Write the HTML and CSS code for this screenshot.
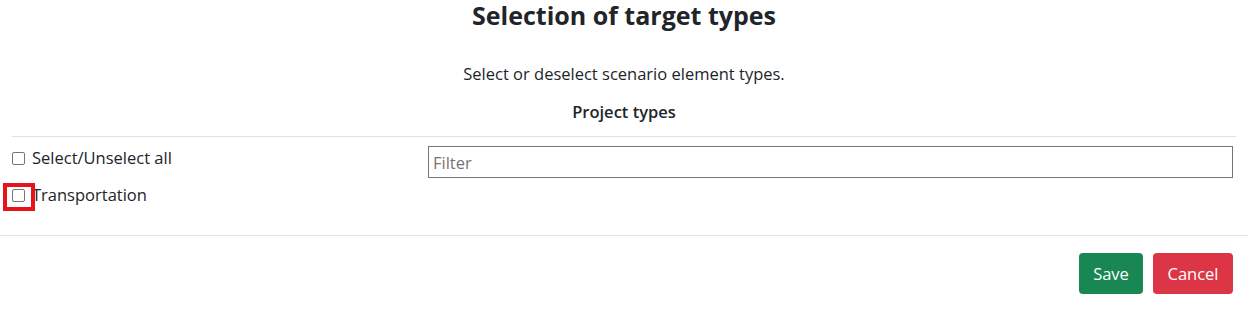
FILE: index.html
```html
<!DOCTYPE html>
<html lang="en">
<head>
<meta charset="utf-8">
<title>Selection of target types</title>
<link rel="stylesheet" href="styles.css">
</head>
<body>
<div class="dialog">
  <h1 class="title">Selection of target types</h1>
  <p class="subtitle">Select or deselect scenario element types.</p>
  <h2 class="section">Project types</h2>
  <hr class="divider">
  <div class="types">
    <div class="checks">
      <label class="check"><input type="checkbox" class="box"><span>Select/Unselect all</span></label>
      <label class="check"><span class="box-wrap"><input type="checkbox" class="box"><span class="highlight"></span></span><span>Transportation</span></label>
    </div>
    <input type="text" class="filter" placeholder="Filter">
  </div>
  <div class="footer">
    <button class="btn btn-save">Save</button>
    <button class="btn btn-cancel">Cancel</button>
  </div>
</div>
</body>
</html>
```
FILE: styles.css
```css
* { box-sizing: border-box; }
html, body { margin: 0; padding: 0; background: #fff; }
body {
  font-family: "Open Sans", "Noto Sans", sans-serif;
  color: #212529;
  font-size: 16px;
}
.dialog { width: 1248px; }
.title {
  margin: 0;
  text-align: center;
  font-size: 25px;
  line-height: 30px;
  font-weight: 700;
}
.subtitle {
  margin: 32px 0 0;
  text-align: center;
  font-size: 16.5px;
  line-height: 24px;
}
.section {
  margin: 14px 0 0;
  text-align: center;
  font-size: 16.5px;
  line-height: 24px;
  font-weight: 600;
}
.divider {
  margin: 12px 12px 0;
  border: 0;
  border-top: 1px solid #dee2e6;
  height: 0;
}
.types {
  display: grid;
  grid-template-columns: 416px 805px;
  padding: 0 12px;
  margin-top: 9px;
  align-items: start;
}
.checks { display: flex; flex-direction: column; gap: 13px; }
.check {
  display: flex;
  align-items: center;
  gap: 7px;
  font-size: 16.5px;
  line-height: 24px;
}
.box-wrap { position: relative; display: flex; }
.box {
  appearance: none;
  -webkit-appearance: none;
  margin: 0;
  width: 13px;
  height: 13px;
  border: 1px solid #767676;
  border-radius: 2px;
  background: #fff;
}
.highlight {
  position: absolute;
  left: -9px;
  top: -6px;
  width: 32px;
  height: 28px;
  border: 4px solid #e3141e;
}
.filter {
  width: 805px;
  height: 32px;
  margin: 0;
  border: 1px solid #767676;
  border-radius: 0;
  padding: 0 4px;
  font-family: inherit;
  font-size: 16.5px;
  color: #212529;
}
.filter::placeholder { color: #757575; }
.footer {
  margin-top: 28px;
  border-top: 1px solid #dee2e6;
  display: flex;
  justify-content: flex-end;
  gap: 10px;
  padding: 17px 15px 0 0;
}
.btn {
  height: 41px;
  border: 0;
  border-radius: 4px;
  color: #fff;
  font-family: inherit;
  font-size: 16.5px;
  padding: 0 10px;
}
.btn-save { background: #198754; width: 64px; }
.btn-cancel { background: #dc3545; width: 80px; }
```
